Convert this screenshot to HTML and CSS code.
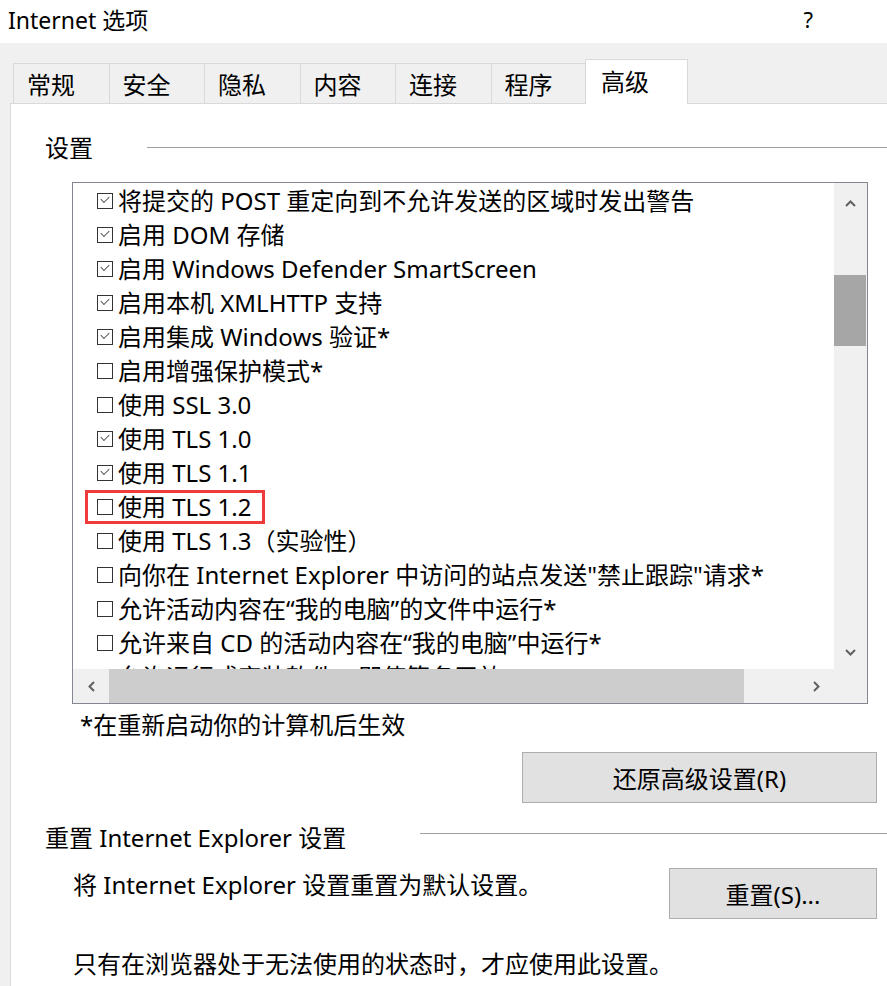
FILE: index.html
```html
<!DOCTYPE html>
<html lang="zh-CN">
<head>
    <meta charset="UTF-8">
    <title>Internet 选项</title>
    <link rel="stylesheet" href="styles.css">
</head>
<body>
    <div class="titlebar">
        <span class="title">Internet 选项</span>
        <span class="help">?</span>
    </div>

    <div class="tabs">
        <div class="tab">常规</div>
        <div class="tab">安全</div>
        <div class="tab">隐私</div>
        <div class="tab">内容</div>
        <div class="tab">连接</div>
        <div class="tab">程序</div>
        <div class="tab active">高级</div>
    </div>

    <div class="panel">
        <div class="group-head">
            <span class="group-label short">设置</span>
            <span class="group-line"></span>
        </div>

        <div class="listbox">
            <div class="list-content">
                <div class="item"><span class="check on"></span>将提交的 POST 重定向到不允许发送的区域时发出警告</div>
                <div class="item"><span class="check on"></span>启用 DOM 存储</div>
                <div class="item"><span class="check on"></span>启用 Windows Defender SmartScreen</div>
                <div class="item"><span class="check on"></span>启用本机 XMLHTTP 支持</div>
                <div class="item"><span class="check on"></span>启用集成 Windows 验证*</div>
                <div class="item"><span class="check"></span>启用增强保护模式*</div>
                <div class="item"><span class="check"></span>使用 SSL 3.0</div>
                <div class="item"><span class="check on"></span>使用 TLS 1.0</div>
                <div class="item"><span class="check on"></span>使用 TLS 1.1</div>
                <div class="item"><span class="marked"><span class="check"></span>使用 TLS 1.2</span></div>
                <div class="item"><span class="check"></span>使用 TLS 1.3（实验性）</div>
                <div class="item"><span class="check"></span>向你在 Internet Explorer 中访问的站点发送"禁止跟踪"请求*</div>
                <div class="item"><span class="check"></span>允许活动内容在“我的电脑”的文件中运行*</div>
                <div class="item"><span class="check"></span>允许来自 CD 的活动内容在“我的电脑”中运行*</div>
                <div class="item"><span class="check"></span>允许运行或安装软件，即使签名无效</div>
            </div>

            <div class="vscroll">
                <div class="arrow-btn up">
                    <svg width="11" height="7" viewBox="0 0 11 7"><polyline points="1,6 5.5,1.5 10,6" /></svg>
                </div>
                <div class="vtrack"><div class="vthumb"></div></div>
                <div class="arrow-btn">
                    <svg width="11" height="7" viewBox="0 0 11 7"><polyline points="1,1 5.5,5.5 10,1" /></svg>
                </div>
            </div>

            <div class="hscroll">
                <div class="arrow-btn side">
                    <svg width="7" height="11" viewBox="0 0 7 11"><polyline points="6,1 1.5,5.5 6,10" /></svg>
                </div>
                <div class="htrack"><div class="hthumb"></div></div>
                <div class="arrow-btn side">
                    <svg width="7" height="11" viewBox="0 0 7 11"><polyline points="1,1 5.5,5.5 1,10" /></svg>
                </div>
            </div>

            <div class="corner"></div>
        </div>

        <p class="note">*在重新启动你的计算机后生效</p>

        <div class="btn-row">
            <button class="button wide">还原高级设置(R)</button>
        </div>

        <div class="group-head reset-head">
            <span class="group-label long">重置 Internet Explorer 设置</span>
            <span class="group-line raised"></span>
        </div>

        <div class="reset-row">
            <p class="text">将 Internet Explorer 设置重置为默认设置。</p>
            <button class="button small">重置(S)...</button>
        </div>

        <p class="text last">只有在浏览器处于无法使用的状态时，才应使用此设置。</p>
    </div>
</body>
</html>
```

FILE: styles.css
```css
body {
    margin: 0;
    background-color: #f0f0f0;
    font-family: "Noto Sans", "Noto Sans CJK SC", sans-serif;
    font-size: 24px;
    color: #000;
    overflow: hidden;
}
p {
    margin: 0;
}

.titlebar {
    height: 43px;
    background-color: #fff;
    display: flex;
    align-items: center;
    justify-content: space-between;
    padding: 0 74px 6px 8px;
    box-sizing: border-box;
    font-size: 23px;
}
.help {
    font-size: 22px;
}

.tabs {
    display: flex;
    align-items: flex-end;
    padding-left: 13px;
    margin-top: 16px;
}
.tab {
    width: 95.5px;
    height: 40px;
    box-sizing: border-box;
    border: 1px solid #d9d9d9;
    border-bottom: none;
    border-right: none;
    padding-left: 13px;
    line-height: 42px;
}
.tab.active {
    width: 103px;
    height: 45px;
    margin-left: -1px;
    margin-bottom: -1px;
    padding-left: 15px;
    line-height: 44px;
    background-color: #fff;
    border-right: 1px solid #d9d9d9;
    position: relative;
}

.panel {
    margin-left: 10px;
    background-color: #fff;
    border-left: 1px solid #d9d9d9;
    border-top: 1px solid #d9d9d9;
    height: 900px;
}

.group-head {
    display: flex;
    align-items: center;
    margin-top: 27px;
    padding-left: 34px;
    line-height: 34px;
}
.group-label.short {
    width: 102px;
}
.group-label.long {
    width: 375px;
}
.group-line {
    flex: 1;
    height: 1px;
    background-color: #a0a0a0;
    margin-bottom: 2px;
}
.group-line.raised {
    margin-bottom: 10px;
}

.listbox {
    margin: 17px 0 0 61px;
    width: 796px;
    height: 522px;
    box-sizing: border-box;
    border: 1px solid #828790;
    display: grid;
    grid-template-columns: 1fr 33px;
    grid-template-rows: 1fr 34px;
}
.list-content {
    overflow: hidden;
    padding-top: 1px;
}
.item {
    height: 34px;
    line-height: 34px;
    padding-left: 24px;
    display: flex;
    align-items: center;
    white-space: nowrap;
}
.check {
    width: 16px;
    height: 16px;
    box-sizing: border-box;
    border: 1px solid #333;
    margin-right: 5px;
    flex-shrink: 0;
    position: relative;
}
.check.on::after {
    content: "";
    position: absolute;
    left: 3px;
    top: 2px;
    width: 7px;
    height: 4px;
    border-left: 1px solid #555;
    border-bottom: 1px solid #555;
    transform: rotate(-45deg);
}
.marked {
    display: flex;
    align-items: center;
    height: 34px;
    box-sizing: border-box;
    border: 3px solid #ef3b3b;
    margin-left: -12px;
    padding: 0 11px 0 9px;
}

.vscroll {
    background-color: #f0f0f0;
    display: flex;
    flex-direction: column;
}
.vtrack {
    flex: 1;
}
.vthumb {
    margin-top: 58px;
    height: 71px;
    margin-right: 1px;
    background-color: #a6a6a6;
}
.arrow-btn {
    height: 34px;
    display: flex;
    align-items: center;
    justify-content: center;
}
.arrow-btn.up {
    padding-top: 6px;
    height: 34px;
    box-sizing: border-box;
}
.arrow-btn.side {
    width: 36px;
    height: auto;
}
.arrow-btn svg polyline {
    fill: none;
    stroke: #606060;
    stroke-width: 2;
}

.hscroll {
    background-color: #f0f0f0;
    display: flex;
}
.htrack {
    flex: 1;
    display: flex;
}
.hthumb {
    width: 635px;
    background-color: #cdcdcd;
}
.corner {
    background-color: #f0f0f0;
}

.note {
    margin: 4px 0 0 69px;
    line-height: 34px;
}

.btn-row {
    display: flex;
    justify-content: flex-end;
    margin-top: 10px;
    padding-right: 10px;
}
.button {
    font-family: inherit;
    font-size: 24px;
    color: #000;
    background-color: #e1e1e1;
    border: 1px solid #adadad;
    padding: 0;
    height: 51px;
}
.button.wide {
    width: 355px;
}
.button.small {
    width: 208px;
}

.reset-head {
    margin-top: 18px;
}

.reset-row {
    display: flex;
    justify-content: space-between;
    align-items: flex-start;
    margin-top: 13px;
    padding: 0 10px 0 62px;
}
.text {
    line-height: 34px;
}
.text.last {
    margin: 28px 0 0 62px;
}
```
